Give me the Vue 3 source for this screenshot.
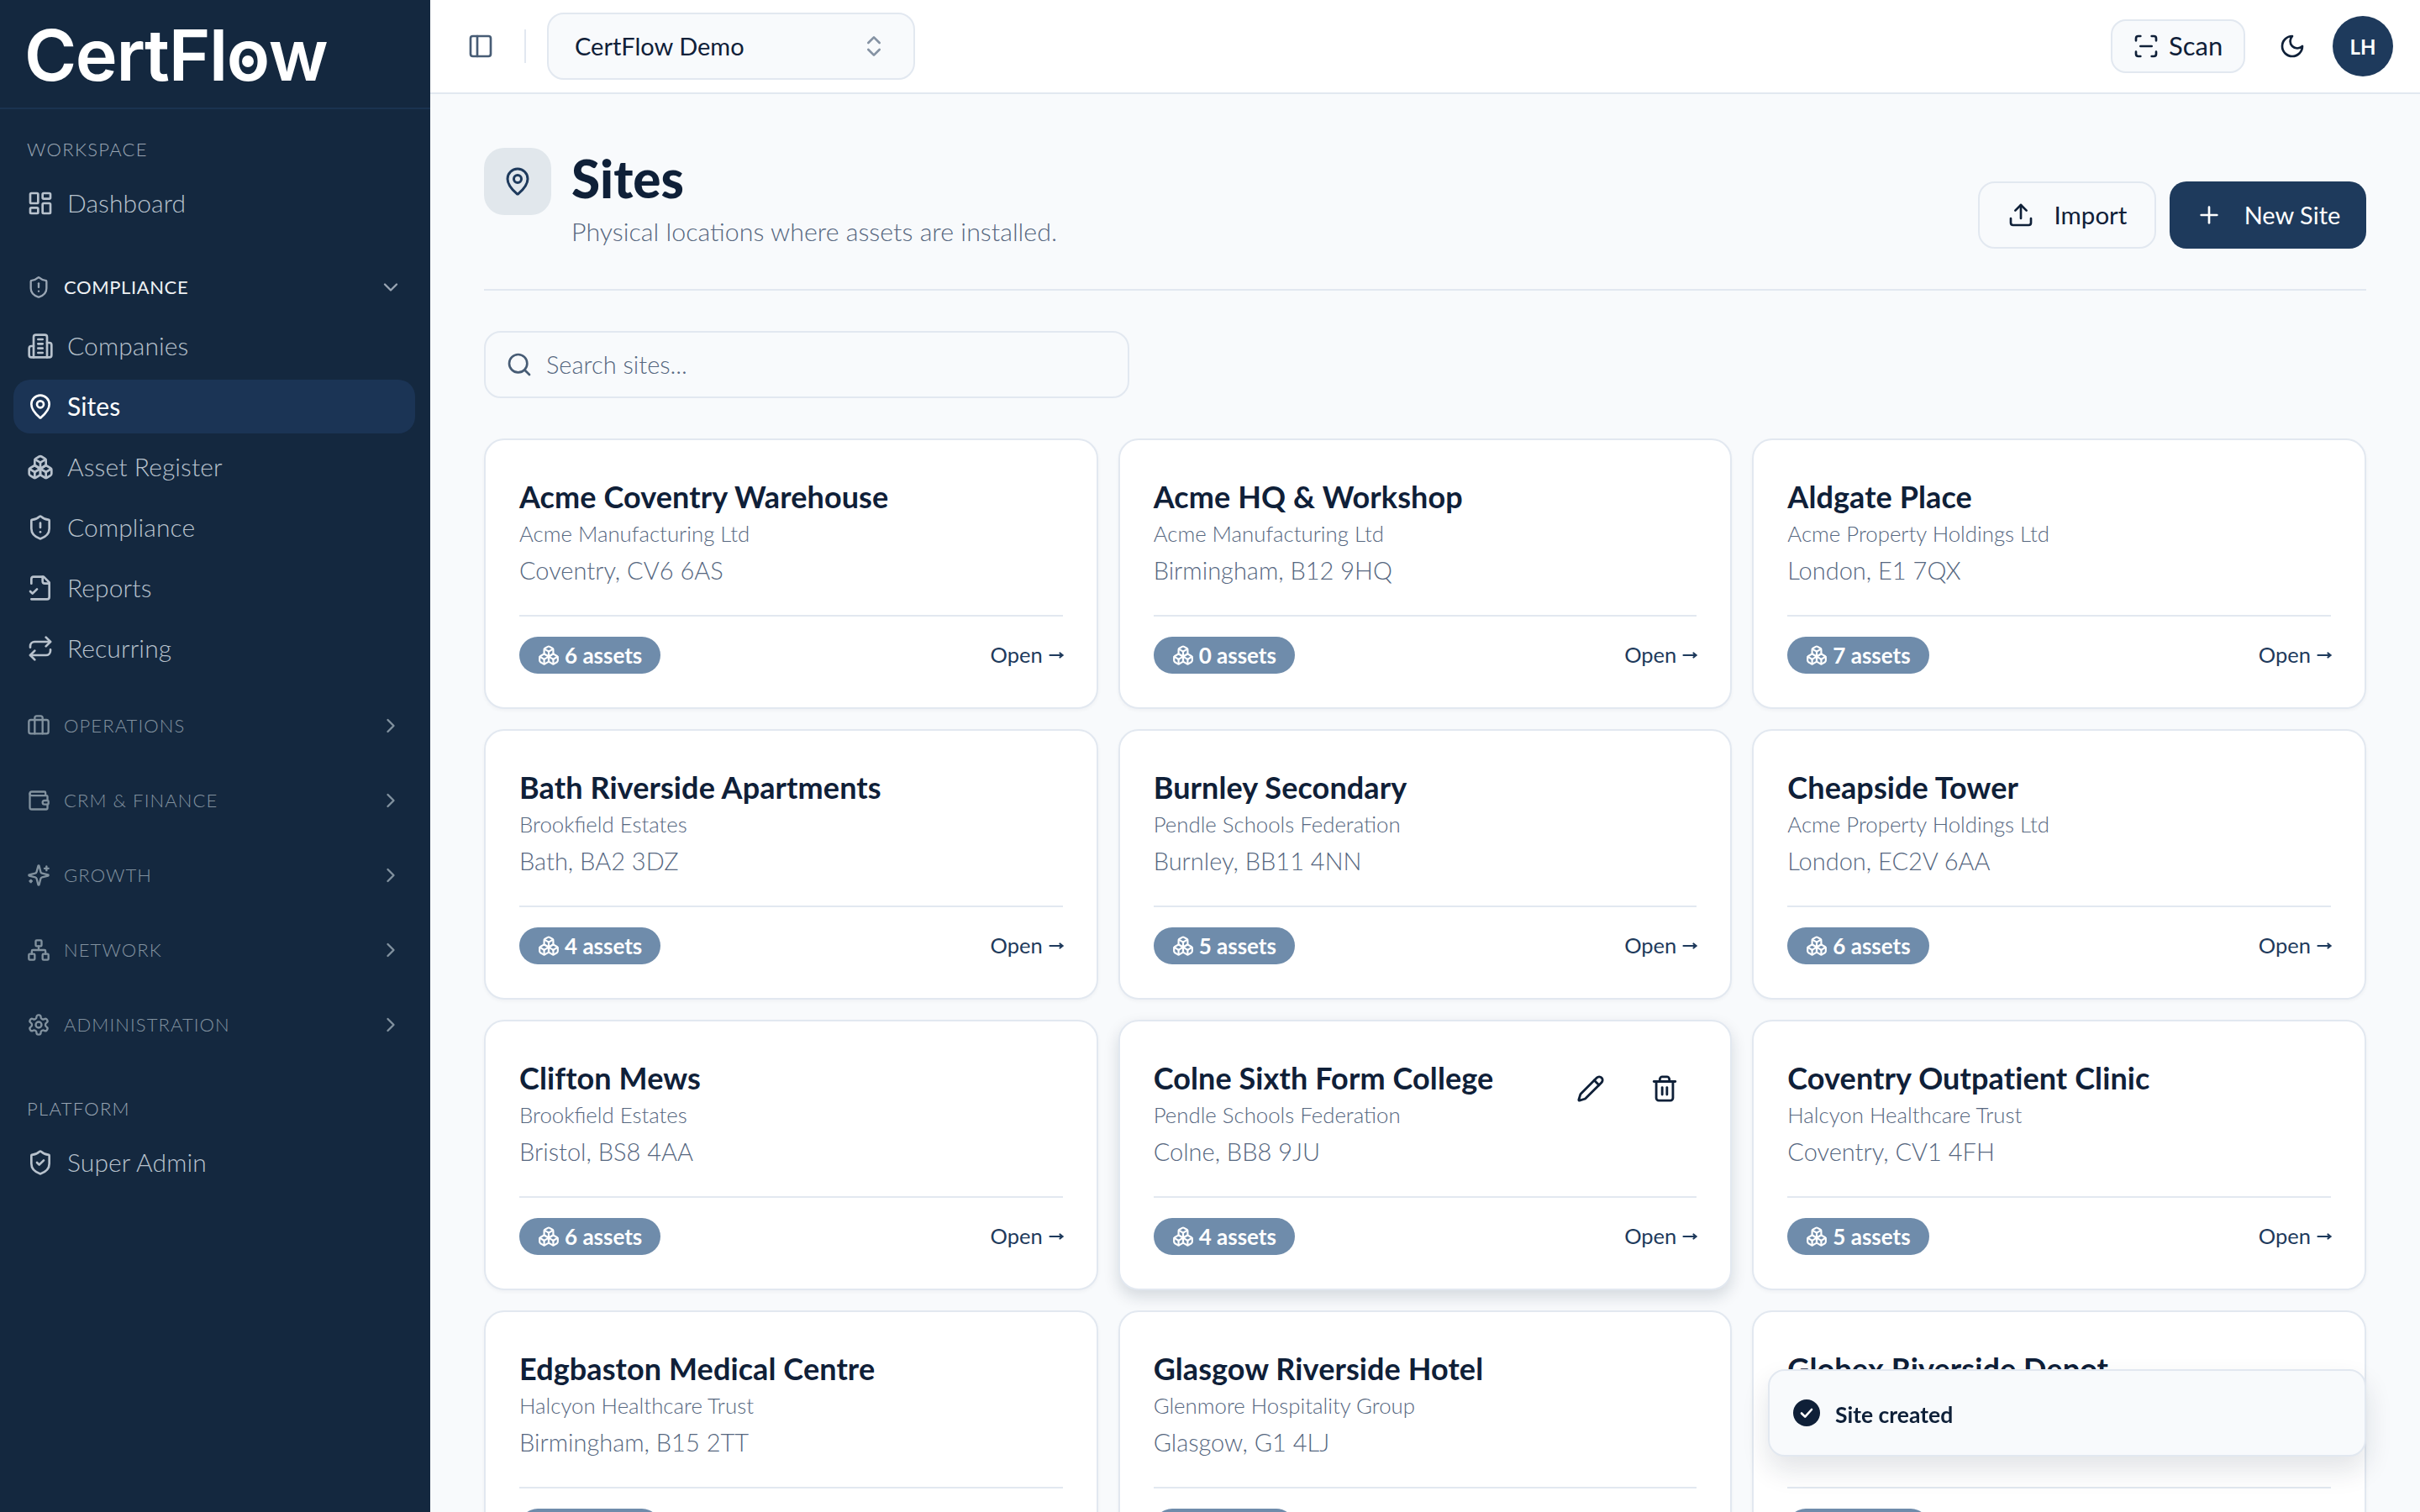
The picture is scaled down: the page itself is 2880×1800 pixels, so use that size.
<script setup>
import { h } from 'vue'

const rect = (x, y, w, ht, r) =>
  `M${x + r} ${y}h${w - 2 * r}a${r} ${r} 0 0 1 ${r} ${r}v${ht - 2 * r}a${r} ${r} 0 0 1-${r} ${r}h-${w - 2 * r}a${r} ${r} 0 0 1-${r}-${r}v-${ht - 2 * r}a${r} ${r} 0 0 1 ${r}-${r}z`
const circle = (cx, cy, r) => `M${cx - r} ${cy}a${r} ${r} 0 1 0 ${2 * r} 0a${r} ${r} 0 1 0-${2 * r} 0z`
const shield = 'M20 13c0 5-3.5 7.5-7.66 8.95a1 1 0 0 1-.67-.01C7.5 20.5 4 18 4 13V6a1 1 0 0 1 1-1c2 0 4.5-1.2 6.24-2.72a1.17 1.17 0 0 1 1.52 0C14.51 3.81 17 5 19 5a1 1 0 0 1 1 1z'
const pin = ['M20 10c0 4.993-5.539 10.193-7.399 11.799a1 1 0 0 1-1.202 0C9.539 20.193 4 14.993 4 10a8 8 0 0 1 16 0', circle(12, 10, 3)]

const icons = {
  dashboard: [rect(3, 3, 7, 9, 1), rect(14, 3, 7, 5, 1), rect(14, 12, 7, 9, 1), rect(3, 16, 7, 5, 1)],
  shieldAlert: [shield, 'M12 8v4', 'M12 16h.01'],
  shieldCheck: [shield, 'm9 12 2 2 4-4'],
  building: ['M6 22V4a2 2 0 0 1 2-2h8a2 2 0 0 1 2 2v18Z', 'M6 12H4a2 2 0 0 0-2 2v6a2 2 0 0 0 2 2h2', 'M18 9h2a2 2 0 0 1 2 2v9a2 2 0 0 1-2 2h-2', 'M10 6h4', 'M10 10h4', 'M10 14h4', 'M10 18h4'],
  pin,
  boxes: ['M2.97 12.92A2 2 0 0 0 2 14.63v3.24a2 2 0 0 0 .97 1.71l3 1.8a2 2 0 0 0 2.06 0L12 19v-5.5l-5-3-4.03 2.42Z', 'm7 16.5-4.74-2.85', 'm7 16.5 5-3', 'M7 16.5v5.17', 'M12 13.5V19l3.97 2.38a2 2 0 0 0 2.06 0l3-1.8a2 2 0 0 0 .97-1.71v-3.24a2 2 0 0 0-.97-1.71L17 10.5l-5 3Z', 'm17 16.5-5-3', 'm17 16.5 4.74-2.85', 'M17 16.5v5.17', 'M7.97 4.42A2 2 0 0 0 7 6.13v4.37l5 3 5-3V6.13a2 2 0 0 0-.97-1.71l-3-1.8a2 2 0 0 0-2.06 0l-3 1.8Z', 'M12 8 7.26 5.15', 'm12 8 4.74-2.85', 'M12 13.5V8'],
  report: ['M4 22h14a2 2 0 0 0 2-2V7l-5-5H6a2 2 0 0 0-2 2v4', 'M14 2v4a2 2 0 0 0 2 2h4', 'm3 15 2 2 4-4'],
  repeat: ['m17 2 4 4-4 4', 'M3 11v-1a4 4 0 0 1 4-4h14', 'm7 22-4-4 4-4', 'M21 13v1a4 4 0 0 1-4 4H3'],
  briefcase: ['M16 20V4a2 2 0 0 0-2-2h-4a2 2 0 0 0-2 2v16', rect(2, 6, 20, 14, 2)],
  wallet: ['M19 7V4a1 1 0 0 0-1-1H5a2 2 0 0 0 0 4h15a1 1 0 0 1 1 1v4h-3a2 2 0 0 0 0 4h3a1 1 0 0 0 1-1v-2a1 1 0 0 0-1-1', 'M3 5v14a2 2 0 0 0 2 2h15a1 1 0 0 0 1-1v-4'],
  sparkles: ['M9.937 15.5A2 2 0 0 0 8.5 14.063l-6.135-1.582a.5.5 0 0 1 0-.962L8.5 9.936A2 2 0 0 0 9.937 8.5l1.582-6.135a.5.5 0 0 1 .963 0L14.063 8.5A2 2 0 0 0 15.5 9.937l6.135 1.581a.5.5 0 0 1 0 .964L15.5 14.063a2 2 0 0 0-1.437 1.437l-1.582 6.135a.5.5 0 0 1-.963 0z', 'M20 3v4', 'M22 5h-4', 'M4 17v2', 'M5 18H3'],
  network: [rect(16, 16, 6, 6, 1), rect(2, 16, 6, 6, 1), rect(9, 2, 6, 6, 1), 'M5 16v-3a1 1 0 0 1 1-1h12a1 1 0 0 1 1 1v3', 'M12 12V8'],
  cog: ['M12.22 2h-.44a2 2 0 0 0-2 2v.18a2 2 0 0 1-1 1.73l-.43.25a2 2 0 0 1-2 0l-.15-.08a2 2 0 0 0-2.73.73l-.22.38a2 2 0 0 0 .73 2.73l.15.1a2 2 0 0 1 1 1.72v.51a2 2 0 0 1-1 1.74l-.15.09a2 2 0 0 0-.73 2.73l.22.38a2 2 0 0 0 2.73.73l.15-.08a2 2 0 0 1 2 0l.43.25a2 2 0 0 1 1 1.73V20a2 2 0 0 0 2 2h.44a2 2 0 0 0 2-2v-.18a2 2 0 0 1 1-1.73l.43-.25a2 2 0 0 1 2 0l.15.08a2 2 0 0 0 2.73-.73l.22-.39a2 2 0 0 0-.73-2.73l-.15-.08a2 2 0 0 1-1-1.74v-.5a2 2 0 0 1 1-1.74l.15-.09a2 2 0 0 0 .73-2.73l-.22-.38a2 2 0 0 0-2.73-.73l-.15.08a2 2 0 0 1-2 0l-.43-.25a2 2 0 0 1-1-1.73V4a2 2 0 0 0-2-2z', circle(12, 12, 3)],
  panel: [rect(3, 3, 18, 18, 2), 'M9 3v18'],
  updown: ['m7 15 5 5 5-5', 'm7 9 5-5 5 5'],
  search: ['m21 21-4.34-4.34', circle(11, 11, 8)],
  scan: ['M3 7V5a2 2 0 0 1 2-2h2', 'M17 3h2a2 2 0 0 1 2 2v2', 'M21 17v2a2 2 0 0 1-2 2h-2', 'M7 21H5a2 2 0 0 1-2-2v-2', 'M7 12h10'],
  moon: ['M12 3a6 6 0 0 0 9 9 9 9 0 1 1-9-9Z'],
  upload: ['M21 15v4a2 2 0 0 1-2 2H5a2 2 0 0 1-2-2v-4', 'M17 8l-5-5-5 5', 'M12 3v12'],
  plus: ['M5 12h14', 'M12 5v14'],
  pencil: ['M21.174 6.812a1 1 0 0 0-3.986-3.987L3.842 16.174a2 2 0 0 0-.5.83l-1.321 4.352a.5.5 0 0 0 .623.622l4.353-1.32a2 2 0 0 0 .83-.497z', 'm15 5 4 4'],
  trash: ['M3 6h18', 'M19 6v14c0 1-1 2-2 2H7c-1 0-2-1-2-2V6', 'M8 6V4c0-1 1-2 2-2h4c1 0 2 1 2 2v2', 'M10 11v6', 'M14 11v6'],
  down: ['m6 9 6 6 6-6'],
  right: ['m9 18 6-6-6-6']
}

const Icon = (props) =>
  h(
    'svg',
    { viewBox: '0 0 24 24', fill: 'none', stroke: 'currentColor', 'stroke-width': 2, 'stroke-linecap': 'round', 'stroke-linejoin': 'round' },
    icons[props.name].map((d) => h('path', { d }))
  )
Icon.props = ['name']

const complianceItems = [
  { label: 'Companies', icon: 'building' },
  { label: 'Sites', icon: 'pin', active: true },
  { label: 'Asset Register', icon: 'boxes' },
  { label: 'Compliance', icon: 'shieldAlert' },
  { label: 'Reports', icon: 'report' },
  { label: 'Recurring', icon: 'repeat' }
]
const groups = [
  { label: 'OPERATIONS', icon: 'briefcase' },
  { label: 'CRM & FINANCE', icon: 'wallet' },
  { label: 'GROWTH', icon: 'sparkles' },
  { label: 'NETWORK', icon: 'network' },
  { label: 'ADMINISTRATION', icon: 'cog' }
]
const sites = [
  { name: 'Acme Coventry Warehouse', org: 'Acme Manufacturing Ltd', place: 'Coventry, CV6 6AS', assets: 6 },
  { name: 'Acme HQ & Workshop', org: 'Acme Manufacturing Ltd', place: 'Birmingham, B12 9HQ', assets: 0 },
  { name: 'Aldgate Place', org: 'Acme Property Holdings Ltd', place: 'London, E1 7QX', assets: 7 },
  { name: 'Bath Riverside Apartments', org: 'Brookfield Estates', place: 'Bath, BA2 3DZ', assets: 4 },
  { name: 'Burnley Secondary', org: 'Pendle Schools Federation', place: 'Burnley, BB11 4NN', assets: 5 },
  { name: 'Cheapside Tower', org: 'Acme Property Holdings Ltd', place: 'London, EC2V 6AA', assets: 6 },
  { name: 'Clifton Mews', org: 'Brookfield Estates', place: 'Bristol, BS8 4AA', assets: 6 },
  { name: 'Colne Sixth Form College', org: 'Pendle Schools Federation', place: 'Colne, BB8 9JU', assets: 4, hover: true },
  { name: 'Coventry Outpatient Clinic', org: 'Halcyon Healthcare Trust', place: 'Coventry, CV1 4FH', assets: 5 },
  { name: 'Edgbaston Medical Centre', org: 'Halcyon Healthcare Trust', place: 'Birmingham, B15 2TT', assets: 5 },
  { name: 'Glasgow Riverside Hotel', org: 'Glenmore Hospitality Group', place: 'Glasgow, G1 4LJ', assets: 5 },
  { name: 'Globex Riverside Depot', org: 'Globex Logistics', place: 'Leeds, LS1 4AP', assets: 5 }
]
</script>

<template>
  <div class="app">
    <aside class="sidebar">
      <div class="logo">CertFl<span class="logo-o">o</span>w</div>
      <nav class="nav">
        <div class="label">WORKSPACE</div>
        <a class="item"><Icon name="dashboard" class="item-icon" /><span>Dashboard</span></a>

        <div class="group-head expanded">
          <Icon name="shieldAlert" class="group-icon" />
          <span class="group-name">COMPLIANCE</span>
          <Icon name="down" class="group-chev" />
        </div>
        <div class="items">
          <a v-for="it in complianceItems" :key="it.label" class="item" :class="{ active: it.active }">
            <Icon :name="it.icon" class="item-icon" /><span>{{ it.label }}</span>
          </a>
        </div>

        <div class="groups">
          <div v-for="g in groups" :key="g.label" class="group-head">
            <Icon :name="g.icon" class="group-icon" />
            <span class="group-name">{{ g.label }}</span>
            <Icon name="right" class="group-chev" />
          </div>
        </div>

        <div class="label platform">PLATFORM</div>
        <a class="item"><Icon name="shieldCheck" class="item-icon" /><span>Super Admin</span></a>
      </nav>
    </aside>

    <div class="main">
      <header class="topbar">
        <button class="icon-btn"><Icon name="panel" class="panel-icon" /></button>
        <div class="sep"></div>
        <div class="tenant">
          <span>CertFlow Demo</span>
          <Icon name="updown" class="updown" />
        </div>
        <div class="top-right">
          <button class="scan"><Icon name="scan" class="scan-icon" /><span>Scan</span></button>
          <button class="moon"><Icon name="moon" class="moon-icon" /></button>
          <div class="avatar">LH</div>
        </div>
      </header>

      <main class="content">
        <section class="page-head">
          <div class="head-icon"><Icon name="pin" class="head-pin" /></div>
          <div class="head-text">
            <h1>Sites</h1>
            <p>Physical locations where assets are installed.</p>
          </div>
          <div class="head-actions">
            <button class="btn outline"><Icon name="upload" class="btn-icon" /><span>Import</span></button>
            <button class="btn primary"><Icon name="plus" class="btn-icon" /><span>New Site</span></button>
          </div>
        </section>

        <div class="search">
          <Icon name="search" class="search-icon" />
          <span>Search sites...</span>
        </div>

        <div class="grid">
          <article v-for="s in sites" :key="s.name" class="card" :class="{ hover: s.hover }">
            <div v-if="s.hover" class="card-actions">
              <Icon name="pencil" class="act-icon" />
              <Icon name="trash" class="act-icon" />
            </div>
            <h3>{{ s.name }}</h3>
            <div class="org">{{ s.org }}</div>
            <div class="place">{{ s.place }}</div>
            <div class="card-foot">
              <span class="badge"><Icon name="boxes" class="badge-icon" />{{ s.assets }} assets</span>
              <span class="open-link">
                <span>Open</span>
                <svg class="arrow" viewBox="0 0 18 16" fill="none" stroke="currentColor" stroke-width="2.2" stroke-linecap="round" stroke-linejoin="round">
                  <path d="M1.5 8h15" /><path d="M13.5 5.5 16.5 8l-3 2.5" />
                </svg>
              </span>
            </div>
          </article>
        </div>
      </main>
    </div>

    <div class="toast">
      <svg class="toast-check" viewBox="0 0 32 32">
        <circle cx="16" cy="16" r="16" fill="#0f2038" />
        <path d="M10 16.5l4.2 4.2L22 12" fill="none" stroke="#fff" stroke-width="2.6" stroke-linecap="round" stroke-linejoin="round" />
      </svg>
      <span>Site created</span>
    </div>
  </div>
</template>

<style>
html, body { margin: 0; background: #f8fafc; }
</style>

<style scoped>
.app {
  display: flex;
  height: 100vh;
  overflow: hidden;
  font-family: "Lato", "DejaVu Sans", sans-serif;
  color: #0f2038;
}
button { font: inherit; color: inherit; cursor: pointer; }

.sidebar { width: 512px; flex: none; background: #14283f; }
.logo {
  height: 130px;
  box-sizing: border-box;
  padding: 0 0 0 29px;
  border-bottom: 2px solid #1a3350;
  font-family: "Inter", sans-serif;
  font-weight: 600;
  font-size: 84.5px;
  line-height: 130px;
  letter-spacing: -1.4px;
  color: #fff;
}
.logo-o { position: relative; display: inline-block; }
.logo-o::after {
  content: "";
  position: absolute;
  left: 50%;
  top: 56%;
  width: 14px;
  height: 14px;
  margin: -7px 0 0 -7px;
  border-radius: 50%;
  background: #fff;
}
.nav { padding: 32px 18px 0 16px; }
.label {
  padding-left: 16px;
  height: 32px;
  line-height: 32px;
  margin-bottom: 16px;
  font-size: 22px;
  font-weight: 300;
  letter-spacing: 1.3px;
  color: #9aa6b4;
}
.label.platform { margin-top: 60px; }
.item {
  display: flex;
  align-items: center;
  gap: 16px;
  height: 64px;
  padding: 0 16px;
  border-radius: 20px;
  font-size: 30px;
  font-weight: 300;
  letter-spacing: 0.1px;
  color: #b8c2cd;
}
.item span { padding-bottom: 2px; }
.item.active { background: #1b3455; color: #fff; font-weight: 400; }
.item-icon { width: 32px; height: 32px; flex: none; }
.items { display: flex; flex-direction: column; gap: 8px; margin-top: 14px; }
.group-head {
  display: flex;
  align-items: center;
  gap: 16px;
  height: 48px;
  padding: 0 15px 0 16px;
  font-size: 22px;
  font-weight: 300;
  letter-spacing: 1.1px;
  color: #82929f;
}
.group-head.expanded { margin-top: 44px; color: #eef1f4; font-weight: 400; letter-spacing: 0.6px; }
.group-head.expanded .group-icon, .group-head.expanded .group-chev { color: #9aa6b4; }
.group-icon { width: 28px; height: 28px; flex: none; }
.group-name { flex: 1; padding-bottom: 2px; }
.group-chev { width: 28px; height: 28px; flex: none; }
.groups { display: flex; flex-direction: column; gap: 41px; margin-top: 36px; }

.main { flex: 1; min-width: 0; display: flex; flex-direction: column; }
.topbar {
  height: 112px;
  flex: none;
  box-sizing: border-box;
  display: flex;
  align-items: center;
  padding: 0 32px;
  background: #fff;
  border-bottom: 2px solid #e2e8f0;
}
.icon-btn { width: 56px; height: 56px; padding: 0; border: 0; background: none; display: flex; align-items: center; justify-content: center; color: #475c75; }
.panel-icon { width: 32px; height: 32px; }
.sep { width: 2px; height: 40px; background: #e2e8f0; margin: 0 25px 0 24px; }
.tenant {
  width: 438px;
  height: 80px;
  box-sizing: border-box;
  display: flex;
  align-items: center;
  justify-content: space-between;
  padding: 0 31px 0 31px;
  border: 2px solid #e2e8f0;
  border-radius: 20px;
  background: #f8fafc;
  font-size: 29px;
  font-weight: 400;
}
.tenant span { padding-bottom: 2px; }
.updown { width: 32px; height: 32px; color: #8592a3; }
.top-right { margin-left: auto; display: flex; align-items: center; }
.scan {
  width: 160px;
  height: 64px;
  display: flex;
  align-items: center;
  gap: 11px;
  padding: 0 0 0 24px;
  box-sizing: border-box;
  border: 2px solid #e2e8f0;
  border-radius: 18px;
  background: #f8fafc;
  font-size: 31px;
  font-weight: 400;
}
.scan span { padding-bottom: 2px; }
.scan-icon { width: 32px; height: 32px; }
.moon { width: 72px; height: 72px; margin: 0 12px 0 20px; padding: 0; border: 0; background: none; display: flex; align-items: center; justify-content: center; }
.moon-icon { width: 32px; height: 32px; }
.avatar {
  width: 72px;
  height: 72px;
  border-radius: 50%;
  background: #1e3a5c;
  color: #fff;
  display: flex;
  align-items: center;
  justify-content: center;
  font-size: 24px;
  font-weight: 700;
}

.content { flex: 1; overflow: hidden; padding: 64px 64px 0; }
.page-head {
  display: flex;
  align-items: flex-start;
  gap: 24px;
  padding-bottom: 48px;
  border-bottom: 2px solid #e2e8f0;
}
.head-icon {
  width: 80px;
  height: 80px;
  flex: none;
  border-radius: 24px;
  background: #e1e7ec;
  display: flex;
  align-items: center;
  justify-content: center;
  color: #1e3a5c;
}
.head-pin { width: 36px; height: 36px; }
.head-text { flex: 1; }
h1 { margin: 0; font-size: 62px; line-height: 72px; font-weight: 900; letter-spacing: 0; color: #0f2038; }
.head-text p { margin: 7px 0 0; padding-bottom: 1px; font-size: 30.4px; line-height: 40px; font-weight: 300; color: #56677f; }
.head-actions { display: flex; gap: 16px; align-self: flex-end; }
.btn {
  height: 80px;
  box-sizing: border-box;
  display: flex;
  align-items: center;
  justify-content: center;
  border-radius: 20px;
  font-size: 30px;
  font-weight: 400;
}
.btn span { padding-bottom: 2px; }
.btn.outline { width: 212px; gap: 24px; border: 2px solid #e2e8f0; background: #f8fafc; padding-right: 6px; font-size: 29.5px; }
.btn.primary { width: 234px; gap: 26px; border: 0; background: #1e3a5c; color: #fff; font-size: 29px; }
.btn-icon { width: 32px; height: 32px; }
.search {
  width: 768px;
  height: 80px;
  box-sizing: border-box;
  margin-top: 48px;
  display: flex;
  align-items: center;
  gap: 16px;
  padding: 0 24px;
  border: 2px solid #e2e8f0;
  border-radius: 20px;
  font-size: 29px;
  font-weight: 300;
  color: #56677f;
}
.search span { padding-bottom: 2px; }
.search-icon { width: 32px; height: 32px; color: #475c75; }
.grid { display: grid; grid-template-columns: repeat(3, 1fr); gap: 24px; margin-top: 48px; }
.card {
  position: relative;
  height: 322px;
  box-sizing: border-box;
  padding: 40px;
  background: #fff;
  border: 2px solid #e2e8f0;
  border-radius: 24px;
  box-shadow: 0 2px 4px rgba(15, 32, 56, 0.04);
}
.card.hover { box-shadow: 0 8px 18px rgba(15, 32, 56, 0.15); }
.card-actions {
  position: absolute;
  top: 63px;
  right: 61px;
  display: flex;
  gap: 54px;
}
.act-icon { width: 34px; height: 34px; }
h3 { margin: 0; padding-bottom: 2px; font-size: 36px; line-height: 54px; font-weight: 700; letter-spacing: 0.1px; color: #0f2038; }
.org { font-size: 25.8px; line-height: 30px; padding-bottom: 2px; font-weight: 300; color: #56677f; }
.place { margin-top: 8px; font-size: 29px; line-height: 38px; padding-bottom: 2px; font-weight: 300; color: #56677f; }
.card-foot {
  margin-top: 32px;
  padding-top: 24px;
  border-top: 2px solid #e2e8f0;
  display: flex;
  align-items: center;
  justify-content: space-between;
}
.badge {
  height: 44px;
  display: inline-flex;
  align-items: center;
  gap: 6px;
  padding: 0 22px 0 22px;
  border-radius: 22px;
  background: #6f8cab;
  color: #fff;
  font-size: 26px;
  font-weight: 700;
}
.badge-icon { width: 26px; height: 26px; }
.open-link { display: inline-flex; align-items: center; gap: 7px; font-size: 25.5px; font-weight: 400; color: #1e3a5c; }
.open-link span { padding-bottom: 2px; }
.arrow { width: 18px; height: 16px; margin-right: -1px; }

.toast {
  position: fixed;
  right: 64px;
  bottom: 66px;
  width: 712px;
  height: 104px;
  box-sizing: border-box;
  display: flex;
  align-items: center;
  gap: 18px;
  padding: 0 28px;
  background: #f8fafc;
  border: 2px solid #e2e8f0;
  border-radius: 20px;
  box-shadow: 0 16px 32px rgba(15, 32, 56, 0.12);
  font-size: 26.5px;
  font-weight: 700;
}
.toast span { padding-top: 4px; }
.toast-check { width: 32px; height: 32px; }
</style>
